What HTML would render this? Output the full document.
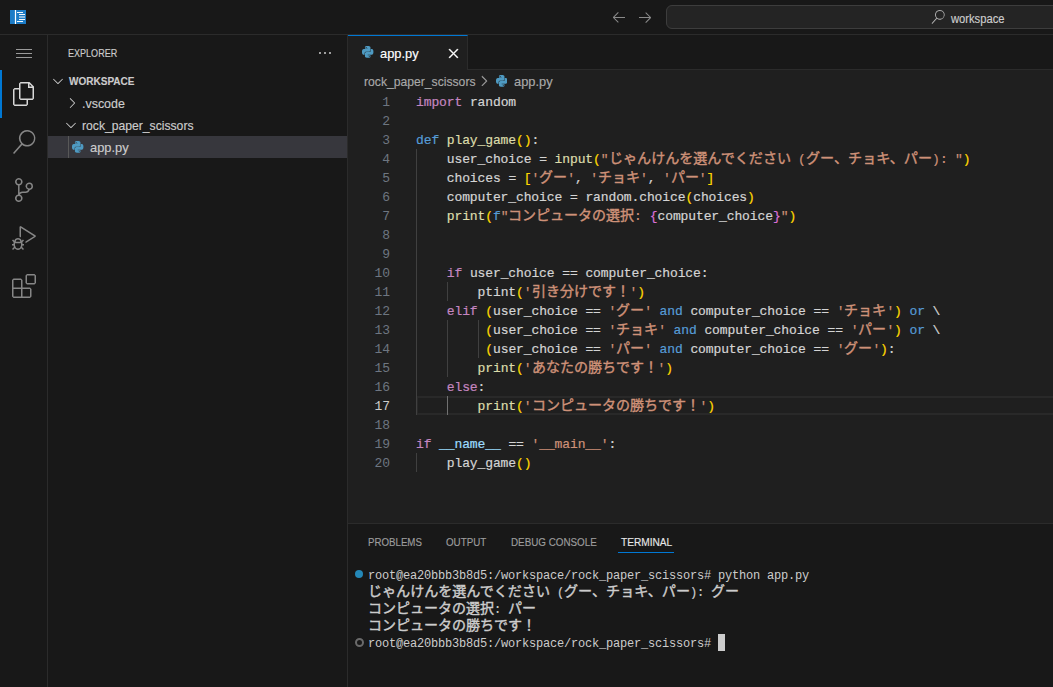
<!DOCTYPE html>
<html lang="en">
<head>
<meta charset="utf-8">
<title>app.py - workspace</title>
<style>
*{box-sizing:border-box;margin:0;padding:0}
html,body{width:1053px;height:687px;overflow:hidden;background:#181818}
body{position:relative;font-family:"Liberation Sans",sans-serif;color:#cccccc;font-size:13px}
.abs{position:absolute}
.t{position:absolute;white-space:pre;line-height:1;-webkit-text-stroke:0.15px}
svg{display:block}
svg.jp.hw{stroke-width:.2px}
svg.ut{position:absolute;overflow:visible}
svg.ut text{font-family:"Liberation Sans",sans-serif;stroke-width:.15px;white-space:pre}
svg.jp{fill:currentColor;stroke:currentColor;stroke-width:.4px;overflow:visible}
svg.jp text{font-family:"Liberation Mono","Noto Sans CJK JP",monospace;white-space:pre}
/* title bar */
#titlebar{position:absolute;left:0;top:0;width:1053px;height:35px;background:#181818;border-bottom:1px solid #2b2b2b}
#cc{position:absolute;left:666px;top:5px;width:400px;height:24px;background:#242424;border:1px solid #3d3d3d;border-radius:6px}
/* activity bar */
#activity{position:absolute;left:0;top:35px;width:48px;height:652px;background:#181818;border-right:1px solid #2b2b2b}
#activity svg{position:absolute;left:12px;fill:#868686}
#actind{position:absolute;left:0;top:70px;width:2px;height:48px;background:#0078d4}
/* side bar */
#sidebar{position:absolute;left:48px;top:35px;width:300px;height:652px;background:#181818;border-right:1px solid #2b2b2b}
#selrow{position:absolute;left:0;top:101px;width:299px;height:22px;background:#37373d}
#selguide{position:absolute;left:20px;top:101px;width:1px;height:22px;background:#585858}
/* editor */
#tabs{position:absolute;left:348px;top:35px;width:705px;height:35px;background:#181818;border-bottom:1px solid #2b2b2b}
#tab{position:absolute;left:0;top:0;width:120px;height:35px;background:#1f1f1f;border-top:1px solid #0078d4;border-right:1px solid #2b2b2b}
#crumbs{position:absolute;left:348px;top:70px;width:705px;height:22px;background:#1f1f1f}
#editor{position:absolute;left:348px;top:92px;width:705px;height:431px;background:#1f1f1f}
.ln{position:absolute;height:19px;line-height:19px;font-family:"Liberation Mono",monospace;font-size:13px;color:#6e7681;white-space:pre}
.ln i,.tk i{display:inline-block;width:7.7px;text-align:center;font-style:normal}
.tt i{display:inline-block;width:7px;text-align:center;font-style:normal}
.ln.cur{color:#cccccc}
.tk{-webkit-text-stroke:0.2px;position:absolute;height:19px;line-height:19px;font-family:"Liberation Mono",monospace;font-size:13px;white-space:pre}
.guide{position:absolute;width:1px;background:#404040}
.guide.act{background:#707070}
#curline{position:absolute;left:416.3px;top:396px;width:640px;height:19px;border:2px solid #292929;border-right:0}
/* panel */
#panel{position:absolute;left:348px;top:523px;width:705px;height:164px;background:#181818;border-top:1px solid #2b2b2b}
.ptab{-webkit-text-stroke:0.15px;position:absolute;top:537px;font-size:11px;line-height:11px;white-space:pre;color:#9d9d9d}
.ptab.on{color:#e7e7e7}
#punder{position:absolute;left:618px;top:552px;width:56px;height:1px;background:#0078d4}
.tt{position:absolute;height:17px;line-height:17px;font-family:"Liberation Mono",monospace;font-size:12px;white-space:pre;color:#cccccc}
.cursor{position:absolute;width:7px;height:17px;background:#cccccc}
</style>
</head>
<body>
<svg width="0" height="0" style="position:absolute"><defs><path id="pyicon" fill="#4e9ac2" transform="scale(0.5 0.5208)" d="M14.25.18l.9.2.73.26.59.3.45.32.34.34.25.34.16.33.1.3.04.26.02.2-.01.13V8.5l-.05.63-.13.55-.21.46-.26.38-.3.31-.33.25-.35.19-.35.14-.33.1-.3.07-.26.04-.21.02H8.77l-.69.05-.59.14-.5.22-.41.27-.33.32-.27.35-.2.36-.15.37-.1.35-.07.32-.04.27-.02.21v3.06H3.17l-.21-.03-.28-.07-.32-.12-.35-.18-.36-.26-.36-.36-.35-.46-.32-.59-.28-.73-.21-.88-.14-1.05-.05-1.23.06-1.22.16-1.04.24-.87.32-.71.36-.57.4-.44.42-.33.42-.24.4-.16.36-.1.32-.05.24-.01h.16l.06.01h8.16v-.83H6.18l-.01-2.75-.02-.37.05-.34.11-.31.17-.28.25-.26.31-.23.38-.2.44-.18.51-.15.58-.12.64-.1.71-.06.77-.04.84-.02 1.27.05zm-6.3 1.98l-.23.33-.08.41.08.41.23.34.33.22.41.09.41-.09.33-.22.23-.34.08-.41-.08-.41-.23-.33-.33-.22-.41-.09-.41.09zm13.09 3.95l.28.06.32.12.35.18.36.27.36.35.35.47.32.59.28.73.21.88.14 1.04.05 1.23-.06 1.23-.16 1.04-.24.86-.32.71-.36.57-.4.45-.42.33-.42.24-.4.16-.36.09-.32.05-.24.02-.16-.01h-8.22v.82h5.84l.01 2.76.02.36-.05.34-.11.31-.17.29-.25.25-.31.24-.38.2-.44.17-.51.15-.58.13-.64.09-.71.07-.77.04-.84.01-1.27-.04-1.07-.14-.9-.2-.73-.25-.59-.3-.45-.33-.34-.34-.25-.34-.16-.33-.1-.3-.04-.25-.02-.2.01-.13v-5.34l.05-.64.13-.54.21-.46.26-.38.3-.32.33-.24.35-.2.35-.14.33-.1.3-.06.26-.04.21-.02.13-.01h5.84l.69-.05.59-.14.5-.21.41-.28.33-.32.27-.35.2-.36.15-.36.1-.35.07-.32.04-.28.02-.21V6.07h2.09l.14.01zm-6.47 14.25l-.23.33-.08.41.08.41.23.33.33.23.41.08.41-.08.33-.23.23-.33.08-.41-.08-.41-.23-.33-.33-.23-.41-.08-.41.08z"/></defs></svg>

<!-- ================= TITLE BAR ================= -->
<div id="titlebar">
  <svg class="abs" style="left:10px;top:10px" width="16" height="14" viewBox="0 0 16 14">
    <rect x="0" y="0" width="16" height="14" fill="#1c7cc7"/>
    <rect x="4.9" y="0" width="1.2" height="14" fill="#ffffff"/>
    <rect x="7" y="2" width="6" height="1" fill="#ffffff" opacity=".95"/>
    <rect x="9" y="4" width="6" height="1" fill="#ffffff" opacity=".95"/>
    <rect x="9" y="6" width="6" height="2" fill="#ffffff" opacity=".5"/>
    <rect x="9" y="9" width="6" height="1" fill="#ffffff" opacity=".95"/>
    <rect x="7" y="11" width="6" height="1" fill="#ffffff" opacity=".95"/>
  </svg>
  <svg class="abs" style="left:610.8px;top:9px" width="16" height="16" viewBox="0 0 16 16" fill="#8a8a8a"><path d="M7 3.093l-5 5V8.8l5 5 .707-.707-4.146-4.147H14v-1H3.56L7.708 3.8 7 3.093z"/></svg>
  <svg class="abs" style="left:637px;top:9px" width="16" height="16" viewBox="0 0 16 16" fill="#8a8a8a"><path d="M9 13.887l5-5V8.18l-5-5-.707.707 4.146 4.147H2v1h10.44L8.292 13.18l.707.707z"/></svg>
  <div id="cc"></div>
  <svg class="abs" style="left:931px;top:10px" width="14" height="14" viewBox="0 0 24 24" fill="#b0b0b0"><path d="M15.25 0a8.25 8.25 0 0 0-6.18 13.72L1 22.88l1.12 1.12 8.05-9.12A8.251 8.251 0 1 0 15.25.01V0zm0 15a6.75 6.75 0 1 1 0-13.5 6.75 6.75 0 0 1 0 13.5z"/></svg>
  <svg class="ut" style="left:950.92px;top:4.50px" width="56" height="24"><text x="0" y="18" textLength="53.47" lengthAdjust="spacingAndGlyphs" font-size="12" fill="#cccccc" stroke="#cccccc">workspace</text></svg>
</div>

<!-- ================= ACTIVITY BAR ================= -->
<div id="activity">
  <!-- hamburger -->
  <div class="abs" style="left:16px;top:14px;width:16px;height:1px;background:#9a9a9a"></div>
  <div class="abs" style="left:16px;top:18px;width:16px;height:1px;background:#9a9a9a"></div>
  <div class="abs" style="left:16px;top:22px;width:16px;height:1px;background:#9a9a9a"></div>
  <!-- files (active) -->
  <svg style="top:47px;fill:#d7d7d7" width="24" height="24" viewBox="0 0 24 24"><path d="M17.5 0h-9L7 1.5V6H2.5L1 7.5v15.07L2.5 24h12.07L16 22.57V18h4.7l1.3-1.43V4.5L17.5 0zm0 2.12l2.38 2.38H17.5V2.12zm-3 20.38h-12v-15H7v9.07L8.5 18h6v4.5zm6-6h-12v-15H16V6h4.5v10.5z"/></svg>
  <!-- search -->
  <svg style="top:95px" width="24" height="24" viewBox="0 0 24 24"><path d="M15.25 0a8.25 8.25 0 0 0-6.18 13.72L1 22.88l1.12 1.12 8.05-9.12A8.251 8.251 0 1 0 15.25.01V0zm0 15a6.75 6.75 0 1 1 0-13.5 6.75 6.75 0 0 1 0 13.5z"/></svg>
  <!-- source control -->
  <svg style="top:143px" width="24" height="24" viewBox="0 0 24 24"><path d="M21.007 8.222A3.738 3.738 0 0 0 15.045 5.2a3.737 3.737 0 0 0 1.156 6.583 2.988 2.988 0 0 1-2.668 1.67h-2.99a4.456 4.456 0 0 0-2.989 1.165V7.4a3.737 3.737 0 1 0-1.494 0v9.117a3.776 3.776 0 1 0 1.816.099 2.99 2.99 0 0 1 2.668-1.667h2.99a4.484 4.484 0 0 0 4.223-3.039 3.736 3.736 0 0 0 3.25-3.687zM4.565 3.738a2.242 2.242 0 1 1 4.484 0 2.242 2.242 0 0 1-4.484 0zm4.484 16.441a2.242 2.242 0 1 1-4.484 0 2.242 2.242 0 0 1 4.484 0zm8.221-9.715a2.242 2.242 0 1 1 0-4.485 2.242 2.242 0 0 1 0 4.485z"/></svg>
  <!-- debug -->
  <svg style="top:191px" width="24" height="24" viewBox="0 0 24 24"><path d="M10.94 13.5l-1.32 1.32a3.73 3.73 0 0 0-7.24 0L1.06 13.5 0 14.56l1.72 1.72-.22.22V18H0v1.5h1.5v.08c.077.489.214.966.41 1.42L0 22.94 1.06 24l1.65-1.65A4.308 4.308 0 0 0 6 24a4.31 4.31 0 0 0 3.29-1.65L10.94 24 12 22.94 10.09 21c.198-.464.336-.951.41-1.45v-.1H12V18h-1.5v-1.5l-.22-.22L12 14.56l-1.06-1.06zM6 13.5a2.25 2.25 0 0 1 2.25 2.25h-4.5A2.25 2.25 0 0 1 6 13.5zm3 6a3.33 3.33 0 0 1-3 3 3.33 3.33 0 0 1-3-3v-2.25h6v2.25zm14.76-9.9v1.26L13.5 17.37V15.6l8.5-5.37L9 2v9.46a5.07 5.07 0 0 0-1.5-.72V.63L8.64 0l15.12 9.6z"/></svg>
  <!-- extensions -->
  <svg style="top:239px" width="24" height="24" viewBox="0 0 24 24"><path d="M13.5 1.5L15 0h7.5L24 1.5V9l-1.5 1.5H15L13.5 9V1.5zm1.5 0V9h7.5V1.5H15zM0 15V6l1.5-1.5H9L10.500 6v7.5H18l1.5 1.5v7.5L18 24H1.5L0 22.500V15zm9-1.5V6H1.5v7.5H9zM9 15H1.5v7.5H9V15zm1.5 7.500H18V15h-7.500v7.500z"/></svg>
</div>
<div id="actind"></div>

<!-- ================= SIDE BAR ================= -->
<div id="sidebar">
  <div id="selrow"></div>
  <div id="selguide"></div>
</div>
<svg class="ut" style="left:67.80px;top:39.00px" width="52" height="24"><text x="0" y="18" textLength="49.24" lengthAdjust="spacingAndGlyphs" font-size="11" fill="#cccccc" stroke="#cccccc">EXPLORER</text></svg>
<svg class="abs" style="left:317px;top:45px" width="16" height="16" viewBox="0 0 16 16" fill="#cccccc"><path d="M4 8a1 1 0 1 1-2 0 1 1 0 0 1 2 0zm5 0a1 1 0 1 1-2 0 1 1 0 0 1 2 0zm5 0a1 1 0 1 1-2 0 1 1 0 0 1 2 0z"/></svg>
<svg class="abs" style="left:50px;top:73px" width="16" height="16" viewBox="0 0 16 16" fill="#cccccc"><path d="M7.976 10.072l4.357-4.357.62.618L8.284 11h-.618L3 6.333l.619-.618 4.357 4.357z"/></svg>
<svg class="ut" style="left:68.89px;top:67.00px" width="68" height="24"><text x="0" y="18" textLength="65.48" lengthAdjust="spacingAndGlyphs" font-size="11" font-weight="bold" fill="#cccccc" stroke="#cccccc">WORKSPACE</text></svg>
<svg class="abs" style="left:63.5px;top:95px" width="16" height="16" viewBox="0 0 16 16" fill="#cccccc"><path d="M10.072 8.024L5.715 3.667l.618-.62L11 7.716v.618L6.333 13l-.618-.619 4.357-4.357z"/></svg>
<svg class="ut" style="left:81.89px;top:90.00px" width="45" height="24"><text x="0" y="18" textLength="42.87" lengthAdjust="spacingAndGlyphs" font-size="13" fill="#cccccc" stroke="#cccccc">.vscode</text></svg>
<svg class="abs" style="left:63px;top:117px" width="16" height="16" viewBox="0 0 16 16" fill="#cccccc"><path d="M7.976 10.072l4.357-4.357.62.618L8.284 11h-.618L3 6.333l.619-.618 4.357 4.357z"/></svg>
<svg class="ut" style="left:82.19px;top:112.00px" width="114" height="24"><text x="0" y="18" textLength="111.51" lengthAdjust="spacingAndGlyphs" font-size="13" fill="#cccccc" stroke="#cccccc">rock_paper_scissors</text></svg>
<svg class="abs py" style="left:72.3px;top:141.1px" width="11.4" height="11.8" viewBox="0 0 12 12.5" preserveAspectRatio="none"><use href="#pyicon"/></svg>
<svg class="ut" style="left:90.19px;top:134.00px" width="41" height="24"><text x="0" y="18" textLength="38.65" lengthAdjust="spacingAndGlyphs" font-size="13" fill="#cccccc" stroke="#cccccc">app.py</text></svg>

<!-- ================= EDITOR ================= -->
<div id="tabs"><div id="tab"></div></div>
<svg class="abs py" style="left:362.4px;top:46px" width="11.4" height="11.8" viewBox="0 0 12 12.5" preserveAspectRatio="none"><use href="#pyicon"/></svg>
<svg class="ut" style="left:380.09px;top:40.00px" width="41" height="24"><text x="0" y="18" textLength="38.65" lengthAdjust="spacingAndGlyphs" font-size="13" fill="#ffffff" stroke="#ffffff">app.py</text></svg>
<svg class="abs" style="left:444.8px;top:44.5px" width="17" height="17" viewBox="0 0 16 16" fill="#ffffff" stroke="#ffffff" stroke-width=".35"><path d="M8 8.707l3.646 3.647.708-.707L8.707 8l3.647-3.646-.707-.708L8 7.293 4.354 3.646l-.707.708L7.293 8l-3.646 3.646.707.708L8 8.707z"/></svg>
<div id="crumbs"></div>
<svg class="ut" style="left:364.30px;top:68.00px" width="114" height="24"><text x="0" y="18" textLength="111.51" lengthAdjust="spacingAndGlyphs" font-size="13" fill="#a9a9a9" stroke="#a9a9a9">rock_paper_scissors</text></svg>
<svg class="abs" style="left:476.4px;top:73px" width="16" height="16" viewBox="0 0 16 16" fill="#a9a9a9" stroke="#a9a9a9" stroke-width=".3"><path d="M10.072 8.024L5.715 3.667l.618-.62L11 7.716v.618L6.333 13l-.618-.619 4.357-4.357z"/></svg>
<svg class="abs py" style="left:496.1px;top:74.8px" width="11.4" height="11.8" viewBox="0 0 12 12.5" preserveAspectRatio="none"><use href="#pyicon"/></svg>
<svg class="ut" style="left:513.69px;top:68.00px" width="41" height="24"><text x="0" y="18" textLength="38.65" lengthAdjust="spacingAndGlyphs" font-size="13" fill="#a9a9a9" stroke="#a9a9a9">app.py</text></svg>

<div id="editor"></div>
<div id="curline"></div>
<div class="guide" style="left:416px;top:149px;height:266px"></div>
<div class="guide" style="left:416px;top:453px;height:19px"></div>
<div class="guide" style="left:447px;top:282px;height:19px"></div>
<div class="guide" style="left:447px;top:320px;height:57px"></div>
<div class="guide act" style="left:447px;top:396px;height:19px"></div>
<div class="guide" style="left:478px;top:320px;height:38px"></div>
<div class="ln" style="left:382.30px;top:93px"><i>1</i></div>
<div class="tk" style="left:416.00px;top:93px;color:#c586c0"><i>i</i><i>m</i><i>p</i><i>o</i><i>r</i><i>t</i></div>
<div class="tk" style="left:469.90px;top:93px;color:#d4d4d4"><i>r</i><i>a</i><i>n</i><i>d</i><i>o</i><i>m</i></div>
<div class="ln" style="left:382.30px;top:112px"><i>2</i></div>
<div class="ln" style="left:382.30px;top:131px"><i>3</i></div>
<div class="tk" style="left:416.00px;top:131px;color:#569cd6"><i>d</i><i>e</i><i>f</i></div>
<div class="tk" style="left:446.80px;top:131px;color:#dcdcaa"><i>p</i><i>l</i><i>a</i><i>y</i><i>_</i><i>g</i><i>a</i><i>m</i><i>e</i></div>
<div class="tk" style="left:516.10px;top:131px;color:#ffd700"><i>(</i><i>)</i></div>
<div class="tk" style="left:531.50px;top:131px;color:#d4d4d4"><i>:</i></div>
<div class="ln" style="left:382.30px;top:150px"><i>4</i></div>
<div class="tk" style="left:446.80px;top:150px;color:#d4d4d4"><i>u</i><i>s</i><i>e</i><i>r</i><i>_</i><i>c</i><i>h</i><i>o</i><i>i</i><i>c</i><i>e</i></div>
<div class="tk" style="left:539.20px;top:150px;color:#d4d4d4"><i>=</i></div>
<div class="tk" style="left:554.60px;top:150px;color:#dcdcaa"><i>i</i><i>n</i><i>p</i><i>u</i><i>t</i></div>
<div class="tk" style="left:593.10px;top:150px;color:#ffd700"><i>(</i></div>
<div class="tk" style="left:600.80px;top:150px;color:#ce9178"><i>&quot;</i></div>
<div class="tk" style="left:608.50px;top:149px;color:#ce9178"><svg class="jp" width="182" height="19" viewBox="0 0 182 19"><text x="0" y="14" font-size="14" textLength="182" lengthAdjust="spacingAndGlyphs">じゃんけんを選んでください</text></svg></div>
<div class="tk" style="left:798.20px;top:149px;color:#ce9178"><svg class="jp hw" width="7.7" height="19" viewBox="0 0 7.7 19"><text x="3.85" y="14" font-size="13" text-anchor="middle">(</text></svg></div>
<div class="tk" style="left:805.90px;top:149px;color:#ce9178"><svg class="jp" width="126" height="19" viewBox="0 0 126 19"><text x="0" y="14" font-size="14" textLength="126" lengthAdjust="spacingAndGlyphs">グー、チョキ、パー</text></svg></div>
<div class="tk" style="left:931.90px;top:149px;color:#ce9178"><svg class="jp hw" width="7.7" height="19" viewBox="0 0 7.7 19"><text x="3.85" y="14" font-size="13" text-anchor="middle">)</text></svg></div>
<div class="tk" style="left:939.60px;top:149px;color:#ce9178"><svg class="jp hw" width="7.7" height="19" viewBox="0 0 7.7 19"><text x="3.85" y="14" font-size="13" text-anchor="middle">:</text></svg></div>
<div class="tk" style="left:955.00px;top:150px;color:#ce9178"><i>&quot;</i></div>
<div class="tk" style="left:962.70px;top:150px;color:#ffd700"><i>)</i></div>
<div class="ln" style="left:382.30px;top:169px"><i>5</i></div>
<div class="tk" style="left:446.80px;top:169px;color:#d4d4d4"><i>c</i><i>h</i><i>o</i><i>i</i><i>c</i><i>e</i><i>s</i></div>
<div class="tk" style="left:508.40px;top:169px;color:#d4d4d4"><i>=</i></div>
<div class="tk" style="left:523.80px;top:169px;color:#ffd700"><i>[</i></div>
<div class="tk" style="left:531.50px;top:169px;color:#ce9178"><i>&#x27;</i></div>
<div class="tk" style="left:539.20px;top:168px;color:#ce9178"><svg class="jp" width="28" height="19" viewBox="0 0 28 19"><text x="0" y="14" font-size="14" textLength="28" lengthAdjust="spacingAndGlyphs">グー</text></svg></div>
<div class="tk" style="left:567.20px;top:169px;color:#ce9178"><i>&#x27;</i></div>
<div class="tk" style="left:574.90px;top:169px;color:#d4d4d4"><i>,</i></div>
<div class="tk" style="left:590.30px;top:169px;color:#ce9178"><i>&#x27;</i></div>
<div class="tk" style="left:598.00px;top:168px;color:#ce9178"><svg class="jp" width="42" height="19" viewBox="0 0 42 19"><text x="0" y="14" font-size="14" textLength="42" lengthAdjust="spacingAndGlyphs">チョキ</text></svg></div>
<div class="tk" style="left:640.00px;top:169px;color:#ce9178"><i>&#x27;</i></div>
<div class="tk" style="left:647.70px;top:169px;color:#d4d4d4"><i>,</i></div>
<div class="tk" style="left:663.10px;top:169px;color:#ce9178"><i>&#x27;</i></div>
<div class="tk" style="left:670.80px;top:168px;color:#ce9178"><svg class="jp" width="28" height="19" viewBox="0 0 28 19"><text x="0" y="14" font-size="14" textLength="28" lengthAdjust="spacingAndGlyphs">パー</text></svg></div>
<div class="tk" style="left:698.80px;top:169px;color:#ce9178"><i>&#x27;</i></div>
<div class="tk" style="left:706.50px;top:169px;color:#ffd700"><i>]</i></div>
<div class="ln" style="left:382.30px;top:188px"><i>6</i></div>
<div class="tk" style="left:446.80px;top:188px;color:#d4d4d4"><i>c</i><i>o</i><i>m</i><i>p</i><i>u</i><i>t</i><i>e</i><i>r</i><i>_</i><i>c</i><i>h</i><i>o</i><i>i</i><i>c</i><i>e</i></div>
<div class="tk" style="left:570.00px;top:188px;color:#d4d4d4"><i>=</i></div>
<div class="tk" style="left:585.40px;top:188px;color:#d4d4d4"><i>r</i><i>a</i><i>n</i><i>d</i><i>o</i><i>m</i><i>.</i><i>c</i><i>h</i><i>o</i><i>i</i><i>c</i><i>e</i></div>
<div class="tk" style="left:685.50px;top:188px;color:#ffd700"><i>(</i></div>
<div class="tk" style="left:693.20px;top:188px;color:#d4d4d4"><i>c</i><i>h</i><i>o</i><i>i</i><i>c</i><i>e</i><i>s</i></div>
<div class="tk" style="left:747.10px;top:188px;color:#ffd700"><i>)</i></div>
<div class="ln" style="left:382.30px;top:207px"><i>7</i></div>
<div class="tk" style="left:446.80px;top:207px;color:#dcdcaa"><i>p</i><i>r</i><i>i</i><i>n</i><i>t</i></div>
<div class="tk" style="left:485.30px;top:207px;color:#ffd700"><i>(</i></div>
<div class="tk" style="left:493.00px;top:207px;color:#569cd6"><i>f</i></div>
<div class="tk" style="left:500.70px;top:207px;color:#ce9178"><i>&quot;</i></div>
<div class="tk" style="left:508.40px;top:206px;color:#ce9178"><svg class="jp" width="126" height="19" viewBox="0 0 126 19"><text x="0" y="14" font-size="14" textLength="126" lengthAdjust="spacingAndGlyphs">コンピュータの選択</text></svg></div>
<div class="tk" style="left:634.40px;top:206px;color:#ce9178"><svg class="jp hw" width="7.7" height="19" viewBox="0 0 7.7 19"><text x="3.85" y="14" font-size="13" text-anchor="middle">:</text></svg></div>
<div class="tk" style="left:649.80px;top:207px;color:#da70d6"><i>{</i></div>
<div class="tk" style="left:657.50px;top:207px;color:#d4d4d4"><i>c</i><i>o</i><i>m</i><i>p</i><i>u</i><i>t</i><i>e</i><i>r</i><i>_</i><i>c</i><i>h</i><i>o</i><i>i</i><i>c</i><i>e</i></div>
<div class="tk" style="left:773.00px;top:207px;color:#da70d6"><i>}</i></div>
<div class="tk" style="left:780.70px;top:207px;color:#ce9178"><i>&quot;</i></div>
<div class="tk" style="left:788.40px;top:207px;color:#ffd700"><i>)</i></div>
<div class="ln" style="left:382.30px;top:226px"><i>8</i></div>
<div class="ln" style="left:382.30px;top:245px"><i>9</i></div>
<div class="ln" style="left:374.60px;top:264px"><i>1</i><i>0</i></div>
<div class="tk" style="left:446.80px;top:264px;color:#c586c0"><i>i</i><i>f</i></div>
<div class="tk" style="left:469.90px;top:264px;color:#d4d4d4"><i>u</i><i>s</i><i>e</i><i>r</i><i>_</i><i>c</i><i>h</i><i>o</i><i>i</i><i>c</i><i>e</i></div>
<div class="tk" style="left:562.30px;top:264px;color:#d4d4d4"><i>=</i><i>=</i></div>
<div class="tk" style="left:585.40px;top:264px;color:#d4d4d4"><i>c</i><i>o</i><i>m</i><i>p</i><i>u</i><i>t</i><i>e</i><i>r</i><i>_</i><i>c</i><i>h</i><i>o</i><i>i</i><i>c</i><i>e</i><i>:</i></div>
<div class="ln" style="left:374.60px;top:283px"><i>1</i><i>1</i></div>
<div class="tk" style="left:477.60px;top:283px;color:#d4d4d4"><i>p</i><i>t</i><i>i</i><i>n</i><i>t</i></div>
<div class="tk" style="left:516.10px;top:283px;color:#ffd700"><i>(</i></div>
<div class="tk" style="left:523.80px;top:283px;color:#ce9178"><i>&#x27;</i></div>
<div class="tk" style="left:531.50px;top:282px;color:#ce9178"><svg class="jp" width="98" height="19" viewBox="0 0 98 19"><text x="0" y="14" font-size="14" textLength="98" lengthAdjust="spacingAndGlyphs">引き分けです！</text></svg></div>
<div class="tk" style="left:629.50px;top:283px;color:#ce9178"><i>&#x27;</i></div>
<div class="tk" style="left:637.20px;top:283px;color:#ffd700"><i>)</i></div>
<div class="ln" style="left:374.60px;top:302px"><i>1</i><i>2</i></div>
<div class="tk" style="left:446.80px;top:302px;color:#c586c0"><i>e</i><i>l</i><i>i</i><i>f</i></div>
<div class="tk" style="left:485.30px;top:302px;color:#ffd700"><i>(</i></div>
<div class="tk" style="left:493.00px;top:302px;color:#d4d4d4"><i>u</i><i>s</i><i>e</i><i>r</i><i>_</i><i>c</i><i>h</i><i>o</i><i>i</i><i>c</i><i>e</i></div>
<div class="tk" style="left:585.40px;top:302px;color:#d4d4d4"><i>=</i><i>=</i></div>
<div class="tk" style="left:608.50px;top:302px;color:#ce9178"><i>&#x27;</i></div>
<div class="tk" style="left:616.20px;top:301px;color:#ce9178"><svg class="jp" width="28" height="19" viewBox="0 0 28 19"><text x="0" y="14" font-size="14" textLength="28" lengthAdjust="spacingAndGlyphs">グー</text></svg></div>
<div class="tk" style="left:644.20px;top:302px;color:#ce9178"><i>&#x27;</i></div>
<div class="tk" style="left:659.60px;top:302px;color:#569cd6"><i>a</i><i>n</i><i>d</i></div>
<div class="tk" style="left:690.40px;top:302px;color:#d4d4d4"><i>c</i><i>o</i><i>m</i><i>p</i><i>u</i><i>t</i><i>e</i><i>r</i><i>_</i><i>c</i><i>h</i><i>o</i><i>i</i><i>c</i><i>e</i></div>
<div class="tk" style="left:813.60px;top:302px;color:#d4d4d4"><i>=</i><i>=</i></div>
<div class="tk" style="left:836.70px;top:302px;color:#ce9178"><i>&#x27;</i></div>
<div class="tk" style="left:844.40px;top:301px;color:#ce9178"><svg class="jp" width="42" height="19" viewBox="0 0 42 19"><text x="0" y="14" font-size="14" textLength="42" lengthAdjust="spacingAndGlyphs">チョキ</text></svg></div>
<div class="tk" style="left:886.40px;top:302px;color:#ce9178"><i>&#x27;</i></div>
<div class="tk" style="left:894.10px;top:302px;color:#ffd700"><i>)</i></div>
<div class="tk" style="left:909.50px;top:302px;color:#569cd6"><i>o</i><i>r</i></div>
<div class="tk" style="left:932.60px;top:302px;color:#d4d4d4"><i>\</i></div>
<div class="ln" style="left:374.60px;top:321px"><i>1</i><i>3</i></div>
<div class="tk" style="left:485.30px;top:321px;color:#ffd700"><i>(</i></div>
<div class="tk" style="left:493.00px;top:321px;color:#d4d4d4"><i>u</i><i>s</i><i>e</i><i>r</i><i>_</i><i>c</i><i>h</i><i>o</i><i>i</i><i>c</i><i>e</i></div>
<div class="tk" style="left:585.40px;top:321px;color:#d4d4d4"><i>=</i><i>=</i></div>
<div class="tk" style="left:608.50px;top:321px;color:#ce9178"><i>&#x27;</i></div>
<div class="tk" style="left:616.20px;top:320px;color:#ce9178"><svg class="jp" width="42" height="19" viewBox="0 0 42 19"><text x="0" y="14" font-size="14" textLength="42" lengthAdjust="spacingAndGlyphs">チョキ</text></svg></div>
<div class="tk" style="left:658.20px;top:321px;color:#ce9178"><i>&#x27;</i></div>
<div class="tk" style="left:673.60px;top:321px;color:#569cd6"><i>a</i><i>n</i><i>d</i></div>
<div class="tk" style="left:704.40px;top:321px;color:#d4d4d4"><i>c</i><i>o</i><i>m</i><i>p</i><i>u</i><i>t</i><i>e</i><i>r</i><i>_</i><i>c</i><i>h</i><i>o</i><i>i</i><i>c</i><i>e</i></div>
<div class="tk" style="left:827.60px;top:321px;color:#d4d4d4"><i>=</i><i>=</i></div>
<div class="tk" style="left:850.70px;top:321px;color:#ce9178"><i>&#x27;</i></div>
<div class="tk" style="left:858.40px;top:320px;color:#ce9178"><svg class="jp" width="28" height="19" viewBox="0 0 28 19"><text x="0" y="14" font-size="14" textLength="28" lengthAdjust="spacingAndGlyphs">パー</text></svg></div>
<div class="tk" style="left:886.40px;top:321px;color:#ce9178"><i>&#x27;</i></div>
<div class="tk" style="left:894.10px;top:321px;color:#ffd700"><i>)</i></div>
<div class="tk" style="left:909.50px;top:321px;color:#569cd6"><i>o</i><i>r</i></div>
<div class="tk" style="left:932.60px;top:321px;color:#d4d4d4"><i>\</i></div>
<div class="ln" style="left:374.60px;top:340px"><i>1</i><i>4</i></div>
<div class="tk" style="left:485.30px;top:340px;color:#ffd700"><i>(</i></div>
<div class="tk" style="left:493.00px;top:340px;color:#d4d4d4"><i>u</i><i>s</i><i>e</i><i>r</i><i>_</i><i>c</i><i>h</i><i>o</i><i>i</i><i>c</i><i>e</i></div>
<div class="tk" style="left:585.40px;top:340px;color:#d4d4d4"><i>=</i><i>=</i></div>
<div class="tk" style="left:608.50px;top:340px;color:#ce9178"><i>&#x27;</i></div>
<div class="tk" style="left:616.20px;top:339px;color:#ce9178"><svg class="jp" width="28" height="19" viewBox="0 0 28 19"><text x="0" y="14" font-size="14" textLength="28" lengthAdjust="spacingAndGlyphs">パー</text></svg></div>
<div class="tk" style="left:644.20px;top:340px;color:#ce9178"><i>&#x27;</i></div>
<div class="tk" style="left:659.60px;top:340px;color:#569cd6"><i>a</i><i>n</i><i>d</i></div>
<div class="tk" style="left:690.40px;top:340px;color:#d4d4d4"><i>c</i><i>o</i><i>m</i><i>p</i><i>u</i><i>t</i><i>e</i><i>r</i><i>_</i><i>c</i><i>h</i><i>o</i><i>i</i><i>c</i><i>e</i></div>
<div class="tk" style="left:813.60px;top:340px;color:#d4d4d4"><i>=</i><i>=</i></div>
<div class="tk" style="left:836.70px;top:340px;color:#ce9178"><i>&#x27;</i></div>
<div class="tk" style="left:844.40px;top:339px;color:#ce9178"><svg class="jp" width="28" height="19" viewBox="0 0 28 19"><text x="0" y="14" font-size="14" textLength="28" lengthAdjust="spacingAndGlyphs">グー</text></svg></div>
<div class="tk" style="left:872.40px;top:340px;color:#ce9178"><i>&#x27;</i></div>
<div class="tk" style="left:880.10px;top:340px;color:#ffd700"><i>)</i></div>
<div class="tk" style="left:887.80px;top:340px;color:#d4d4d4"><i>:</i></div>
<div class="ln" style="left:374.60px;top:359px"><i>1</i><i>5</i></div>
<div class="tk" style="left:477.60px;top:359px;color:#dcdcaa"><i>p</i><i>r</i><i>i</i><i>n</i><i>t</i></div>
<div class="tk" style="left:516.10px;top:359px;color:#ffd700"><i>(</i></div>
<div class="tk" style="left:523.80px;top:359px;color:#ce9178"><i>&#x27;</i></div>
<div class="tk" style="left:531.50px;top:358px;color:#ce9178"><svg class="jp" width="126" height="19" viewBox="0 0 126 19"><text x="0" y="14" font-size="14" textLength="126" lengthAdjust="spacingAndGlyphs">あなたの勝ちです！</text></svg></div>
<div class="tk" style="left:657.50px;top:359px;color:#ce9178"><i>&#x27;</i></div>
<div class="tk" style="left:665.20px;top:359px;color:#ffd700"><i>)</i></div>
<div class="ln" style="left:374.60px;top:378px"><i>1</i><i>6</i></div>
<div class="tk" style="left:446.80px;top:378px;color:#c586c0"><i>e</i><i>l</i><i>s</i><i>e</i></div>
<div class="tk" style="left:477.60px;top:378px;color:#d4d4d4"><i>:</i></div>
<div class="ln cur" style="left:374.60px;top:397px"><i>1</i><i>7</i></div>
<div class="tk" style="left:477.60px;top:397px;color:#dcdcaa"><i>p</i><i>r</i><i>i</i><i>n</i><i>t</i></div>
<div class="tk" style="left:516.10px;top:397px;color:#ffd700"><i>(</i></div>
<div class="tk" style="left:523.80px;top:397px;color:#ce9178"><i>&#x27;</i></div>
<div class="tk" style="left:531.50px;top:396px;color:#ce9178"><svg class="jp" width="168" height="19" viewBox="0 0 168 19"><text x="0" y="14" font-size="14" textLength="168" lengthAdjust="spacingAndGlyphs">コンピュータの勝ちです！</text></svg></div>
<div class="tk" style="left:699.50px;top:397px;color:#ce9178"><i>&#x27;</i></div>
<div class="tk" style="left:707.20px;top:397px;color:#ffd700"><i>)</i></div>
<div class="ln" style="left:374.60px;top:416px"><i>1</i><i>8</i></div>
<div class="ln" style="left:374.60px;top:435px"><i>1</i><i>9</i></div>
<div class="tk" style="left:416.00px;top:435px;color:#c586c0"><i>i</i><i>f</i></div>
<div class="tk" style="left:439.10px;top:435px;color:#9cdcfe"><i>_</i><i>_</i><i>n</i><i>a</i><i>m</i><i>e</i><i>_</i><i>_</i></div>
<div class="tk" style="left:508.40px;top:435px;color:#d4d4d4"><i>=</i><i>=</i></div>
<div class="tk" style="left:531.50px;top:435px;color:#ce9178"><i>&#x27;</i><i>_</i><i>_</i><i>m</i><i>a</i><i>i</i><i>n</i><i>_</i><i>_</i><i>&#x27;</i></div>
<div class="tk" style="left:608.50px;top:435px;color:#d4d4d4"><i>:</i></div>
<div class="ln" style="left:374.60px;top:454px"><i>2</i><i>0</i></div>
<div class="tk" style="left:446.80px;top:454px;color:#d4d4d4"><i>p</i><i>l</i><i>a</i><i>y</i><i>_</i><i>g</i><i>a</i><i>m</i><i>e</i></div>
<div class="tk" style="left:516.10px;top:454px;color:#ffd700"><i>(</i><i>)</i></div>

<!-- ================= PANEL ================= -->
<div id="panel"></div>
<svg class="ut" style="left:368.00px;top:528.00px" width="56" height="24"><text x="0" y="18" textLength="53.93" lengthAdjust="spacingAndGlyphs" font-size="11" fill="#9d9d9d" stroke="#9d9d9d">PROBLEMS</text></svg>
<svg class="ut" style="left:445.69px;top:528.00px" width="43" height="24"><text x="0" y="18" textLength="40.22" lengthAdjust="spacingAndGlyphs" font-size="11" fill="#9d9d9d" stroke="#9d9d9d">OUTPUT</text></svg>
<svg class="ut" style="left:510.80px;top:528.00px" width="88" height="24"><text x="0" y="18" textLength="85.78" lengthAdjust="spacingAndGlyphs" font-size="11" fill="#9d9d9d" stroke="#9d9d9d">DEBUG CONSOLE</text></svg>
<svg class="ut" style="left:620.50px;top:528.00px" width="54" height="24"><text x="0" y="18" textLength="51.15" lengthAdjust="spacingAndGlyphs" font-size="11" fill="#e7e7e7" stroke="#e7e7e7">TERMINAL</text></svg>
<div id="punder"></div>
<div class="abs" style="left:355px;top:570px;width:8px;height:8px;border-radius:50%;background:#2488b8"></div>
<div class="abs" style="left:354.5px;top:637.5px;width:9px;height:9px;border-radius:50%;border:2px solid #6a6a6a"></div>
<div class="tt" style="left:368.00px;top:568px"><i>r</i><i>o</i><i>o</i><i>t</i><i>@</i><i>e</i><i>a</i><i>2</i><i>0</i><i>b</i><i>b</i><i>b</i><i>3</i><i>b</i><i>8</i><i>d</i><i>5</i><i>:</i><i>/</i><i>w</i><i>o</i><i>r</i><i>k</i><i>s</i><i>p</i><i>a</i><i>c</i><i>e</i><i>/</i><i>r</i><i>o</i><i>c</i><i>k</i><i>_</i><i>p</i><i>a</i><i>p</i><i>e</i><i>r</i><i>_</i><i>s</i><i>c</i><i>i</i><i>s</i><i>s</i><i>o</i><i>r</i><i>s</i><i>#</i></div>
<div class="tt" style="left:718.00px;top:568px"><i>p</i><i>y</i><i>t</i><i>h</i><i>o</i><i>n</i></div>
<div class="tt" style="left:767.00px;top:568px"><i>a</i><i>p</i><i>p</i><i>.</i><i>p</i><i>y</i></div>
<div class="tt" style="left:368.00px;top:583px"><svg class="jp" width="182" height="17" viewBox="0 0 182 17"><text x="0" y="13" font-size="14" textLength="182" lengthAdjust="spacingAndGlyphs">じゃんけんを選んでください</text></svg></div>
<div class="tt" style="left:557.00px;top:583px"><svg class="jp hw" width="7" height="17" viewBox="0 0 7 17"><text x="3.5" y="13" font-size="12" text-anchor="middle">(</text></svg></div>
<div class="tt" style="left:564.00px;top:583px"><svg class="jp" width="126" height="17" viewBox="0 0 126 17"><text x="0" y="13" font-size="14" textLength="126" lengthAdjust="spacingAndGlyphs">グー、チョキ、パー</text></svg></div>
<div class="tt" style="left:690.00px;top:583px"><svg class="jp hw" width="7" height="17" viewBox="0 0 7 17"><text x="3.5" y="13" font-size="12" text-anchor="middle">)</text></svg></div>
<div class="tt" style="left:697.00px;top:583px"><svg class="jp hw" width="7" height="17" viewBox="0 0 7 17"><text x="3.5" y="13" font-size="12" text-anchor="middle">:</text></svg></div>
<div class="tt" style="left:711.00px;top:583px"><svg class="jp" width="28" height="17" viewBox="0 0 28 17"><text x="0" y="13" font-size="14" textLength="28" lengthAdjust="spacingAndGlyphs">グー</text></svg></div>
<div class="tt" style="left:368.00px;top:600px"><svg class="jp" width="126" height="17" viewBox="0 0 126 17"><text x="0" y="13" font-size="14" textLength="126" lengthAdjust="spacingAndGlyphs">コンピュータの選択</text></svg></div>
<div class="tt" style="left:494.00px;top:600px"><svg class="jp hw" width="7" height="17" viewBox="0 0 7 17"><text x="3.5" y="13" font-size="12" text-anchor="middle">:</text></svg></div>
<div class="tt" style="left:508.00px;top:600px"><svg class="jp" width="28" height="17" viewBox="0 0 28 17"><text x="0" y="13" font-size="14" textLength="28" lengthAdjust="spacingAndGlyphs">パー</text></svg></div>
<div class="tt" style="left:368.00px;top:617px"><svg class="jp" width="168" height="17" viewBox="0 0 168 17"><text x="0" y="13" font-size="14" textLength="168" lengthAdjust="spacingAndGlyphs">コンピュータの勝ちです！</text></svg></div>
<div class="tt" style="left:368.00px;top:636px"><i>r</i><i>o</i><i>o</i><i>t</i><i>@</i><i>e</i><i>a</i><i>2</i><i>0</i><i>b</i><i>b</i><i>b</i><i>3</i><i>b</i><i>8</i><i>d</i><i>5</i><i>:</i><i>/</i><i>w</i><i>o</i><i>r</i><i>k</i><i>s</i><i>p</i><i>a</i><i>c</i><i>e</i><i>/</i><i>r</i><i>o</i><i>c</i><i>k</i><i>_</i><i>p</i><i>a</i><i>p</i><i>e</i><i>r</i><i>_</i><i>s</i><i>c</i><i>i</i><i>s</i><i>s</i><i>o</i><i>r</i><i>s</i><i>#</i></div>
<div class="cursor" style="left:718.00px;top:634px"></div>
</body>
</html>
